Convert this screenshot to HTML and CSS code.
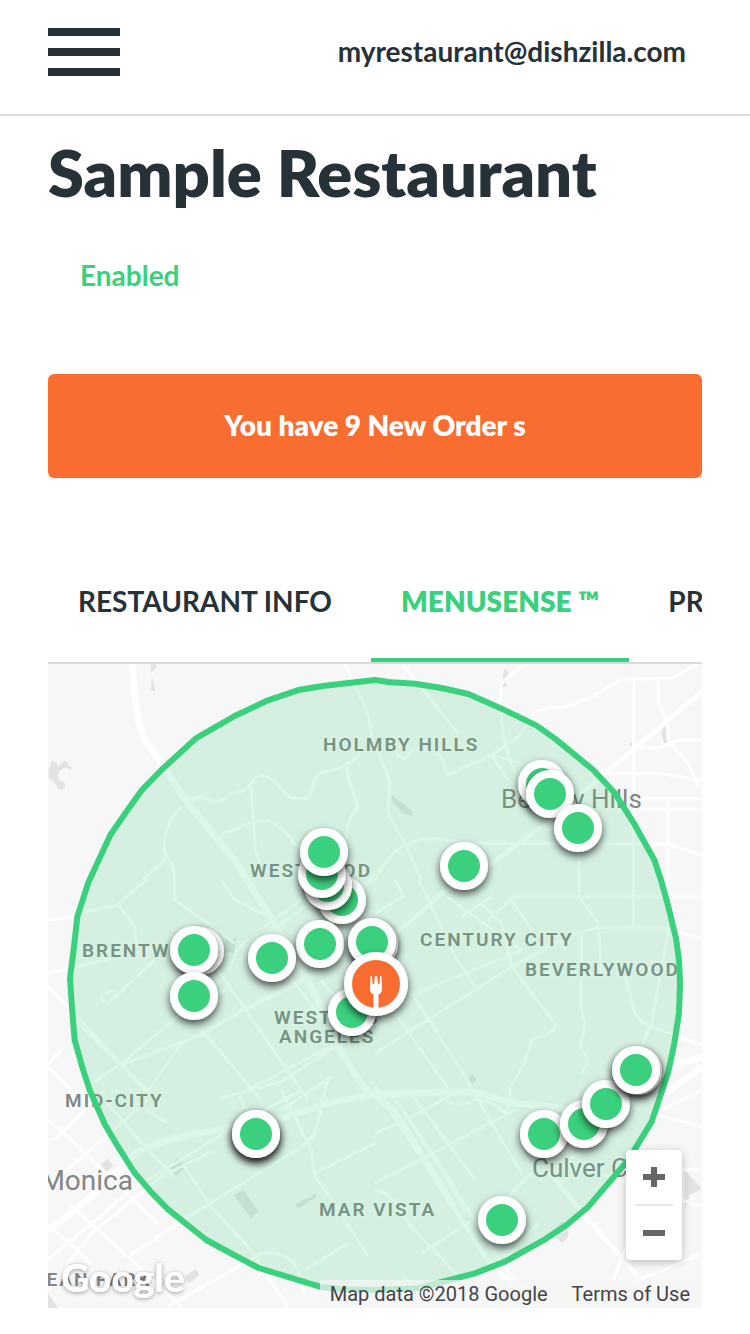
FILE: index.html
```html
<!DOCTYPE html>
<html lang="en">
<head>
<meta charset="utf-8">
<meta name="viewport" content="width=device-width, initial-scale=1">
<title>Sample Restaurant</title>
<link rel="stylesheet" href="styles.css">
</head>
<body>
<header class="topbar">
  <button class="menu" type="button" aria-label="Menu"><span class="menu-bar"></span><span class="menu-bar"></span><span class="menu-bar"></span></button>
  <span class="account">myrestaurant@dishzilla.com</span>
</header>
<main class="page">
  <h1 class="title">Sample Restaurant</h1>
  <p class="status">Enabled</p>
  <button class="orders" type="button">You have 9 New Order s</button>
  <nav class="tabs">
    <button class="tab" type="button">RESTAURANT INFO</button>
    <button class="tab tab-active" type="button">MENUSENSE ™</button>
    <button class="tab" type="button">PROMOTIONS</button>
  </nav>
  <section class="map" aria-label="Delivery map">
    <svg class="map-canvas" viewBox="0 0 654 644" role="img" aria-label="Customers around the restaurant">
      <defs>
        <filter id="drop" x="-50%" y="-50%" width="200%" height="200%"><feDropShadow dx="0" dy="4" stdDeviation="4" flood-color="#000" flood-opacity=".7"/></filter>
        <filter id="glow" x="-10%" y="-20%" width="120%" height="140%"><feDropShadow dx="0" dy="1" stdDeviation="2" flood-color="#000" flood-opacity=".4"/></filter>
        <g id="pin" filter="url(#drop)"><circle r="24" fill="#fff"/><circle r="16" fill="#3bd07d"/></g>
      </defs>
      <svg width="654" height="644" viewBox="0 12 1962 1932">
        <g class="land">
          <path d="M308 12l16 0 0 12-16 16zM312 52l8 28 2 12-14 0zM12 300l14 10 4 10 20-18 10 4 2 10 10 6-4 8-14-8-18 8-8 16 6 16 16 4 0 16-8 8-10-2-14-24-16-10 0-24z"/>
          <path d="M1368 25l14 10-8 28 2 18-14 0zM1848 195l14-6 0 40 4 16-18 4-8-30zM1032 405l62 50-2 14-22-6-40-40zM1745 250l8-4 0 10-8 2z"/>
          <path d="M530 840l36-6-6 24-2 24-28-10zM1262 1255l12-12 12 14-12 16-14-10zM160 1512l18-16 18 20-22 22zM368 1515l20-20 14 14 18 6-36 34-12-8zM558 1606l30-16 42 64-20 22zM744 1632l48-24 10-10 2 12-48 34-12-2zM410 1848l34-20 10 18-32 24zM1538 1686l18 4 6 36-18 24-26-22zM1910 1530l52 56-38 20-14 46zM0 1900l30 44-30 0z"/>
        </g>
        <g class="roads">
          <path class="highway" d="M252 12L262 110Q268 190 290 240L345 315L415 425L560 600L660 760L780 960L876 1170L946 1280L1036 1350L1156 1540L1216 1640"/>
          <path class="highway" d="M0 1710Q120 1630 250 1490Q280 1460 400 1430L716 1370L836 1330L966 1305L1066 1300L1276 1295L1396 1330L1476 1335Q1650 1370 1741 1330Q1841 1220 1962 1190M1851 1300L1962 1220"/>
          <path d="M892 12L925 90Q965 150 970 230L1025 360 1020 460 1075 560 1120 660M935 285Q880 330 830 335Q800 340 795 380Q790 415 770 415H730Q710 400 690 375Q640 320 610 370Q590 400 550 400Q500 445 465 408L415 425M895 315L905 370 930 440Q895 480 895 540M608 375L622 560Q630 610 650 640M510 545Q520 515 560 510Q610 480 660 482Q720 510 740 555M400 440Q350 490 348 560L355 595L285 660M355 595Q380 610 380 660V720L480 790L560 850"/>
          <path d="M516 1315L700 1265L860 1160M575 1308L590 1350M700 1350L850 1250M840 1260L816 1340L800 1420L760 1460M1051 1330L1200 1560L1250 1650M1196 1320Q1230 1350 1276 1320Q1320 1310 1370 1360L1400 1310M1276 1295L1420 1540"/>
          <g transform="translate(981 0)">
            <path d="M85 12L120 60L250 220M460 12Q400 40 378 75L376 130L385 220L400 290L420 340M60 270Q80 320 110 270Q150 260 195 285L220 345L350 285L430 230L480 155Q520 140 570 142L650 110L740 58L890 55L970 12M350 285L440 310M350 285L400 360M776 58V660M850 58V130L875 180L880 240L940 310L970 380M776 265H850L910 240H981M690 340H850L981 360M770 415H981M790 447H981M880 415V710M0 660Q40 580 90 555Q160 520 270 550L880 553L981 585M612 555V660"/>
            <path class="avenue" d="M981 95L690 340L500 500L350 610L200 700L100 790L-20 870"/>
          </g>
          <g transform="translate(0 660)">
            <path d="M0 120Q60 115 90 100L210 75L270 20L300 0M210 75L260 140L265 200M0 280L80 262L300 210M0 320L60 380L300 640M320 240L180 370Q130 350 200 330M0 560L100 660M-10 565L40 510M60 660L220 550L400 400L550 320M230 550L470 460L620 370L890 230M280 660L400 490L570 400L860 260M80 420L330 660M470 460L640 660M510 270L600 400L780 660M690 240L860 470M820 300L900 400M600 180Q560 200 545 270M580 640L981 430M650 140L760 60M660 160L800 60L981 0M520 0L560 60L680 120M800 200L981 -20"/>
          </g>
          <g transform="translate(981 660)">
            <path d="M0 520L190 400L410 260L600 160L670 142H860L981 175M410 50H981M340 120L420 50M260 110L350 50M215 50L440 210M100 350L440 210M320 70L380 130L410 260L540 430Q545 450 520 460L470 480Q450 560 405 620V660M612 0V50L670 130L680 290M775 0V142M620 160L618 380L630 440L615 500L640 540L620 580M750 290L775 380Q780 420 830 440L981 495M880 150L830 430L800 500M110 340L290 620M60 400L230 640M130 0L180 100L240 230L300 320M60 0L85 50L0 100M400 50L430 90L470 150"/>
          </g>
          <g transform="translate(0 1290)">
            <path d="M0 90L70 150L330 400M20 150L170 0M0 290L300 30M0 510L250 300L560 110L760 0M130 430L340 260L500 180M0 600L130 430M240 500L420 380L780 160M60 340L240 500L400 650M20 420L130 520M170 30L300 180L380 260M200 0L360 100M410 230L490 350L600 470L720 650M360 650L640 490M700 0L790 180L800 260L860 340L960 500M820 60L790 160M640 490Q720 480 750 540L770 620M770 540L900 460M800 250L981 160"/>
          </g>
          <g transform="translate(981 1290)">
            <path d="M40 0L180 200L380 520L450 600M0 130L150 60L250 0M100 0L160 80L300 270M0 280L420 60M140 490L400 320L520 200M0 300Q60 310 100 400L250 560M80 550L120 600M380 520L490 400M300 560L400 480M780 400L715 570M845 75L981 110M840 70L981 0M920 240H981M720 600L981 490M640 240L981 350M430 170L500 270M560 220L700 140L760 60"/>
            <path class="avenue" d="M500 220L640 390L790 560M0 -10L140 200L330 500L430 600"/>
          </g>
        </g>
      </svg>
      <g class="labels">
        <text class="district" x="275" y="87">HOLMBY HILLS</text>
        <text class="district" x="202" y="213">WESTWOOD</text>
        <text class="district" x="34" y="293">BRENTWOOD</text>
        <text class="district" x="372" y="282">CENTURY CITY</text>
        <text class="district" x="477" y="312">BEVERLYWOOD</text>
        <text class="district" x="226" y="360">WEST LOS</text>
        <text class="district" x="231" y="379">ANGELES</text>
        <text class="district" x="17" y="443">MID-CITY</text>
        <text class="district" x="271" y="552">MAR VISTA</text>
        <text class="district" x="-31" y="622">OCEAN PARK</text>
        <text class="city" x="453" y="144">Beverly Hills</text>
        <text class="city" x="484" y="513">Culver City</text>
        <text class="town" x="85" y="526" text-anchor="end">Santa Monica</text>
      </g>
      <svg width="654" height="644" viewBox="0 12 1962 1932">
        <polygon class="zone" points="981,60 830,77 755,89 660,121 560,168 505,200 445,234 340,330 280,392 235,455 187,525 122,665 88,770 78,860 66,955 72,1045 80,1140 103,1222 125,1290 170,1392 210,1460 258,1536 310,1597 360,1648 475,1740 530,1770 632,1824 815,1880 890,1888 981,1890 1111,1885 1181,1866 1281,1840 1371,1805 1491,1738 1556,1695 1621,1640 1741,1500 1811,1385 1843,1290 1861,1235 1879,1150 1893,1060 1896,970 1893,900 1884,835 1861,740 1839,660 1819,600 1756,487 1701,400 1636,330 1521,236 1466,197 1361,146 1261,102 1181,84 1101,71 1021,66"/>
      </svg>
      <g>
        <use href="#pin" x="494" y="120"/><use href="#pin" x="502" y="130"/><use href="#pin" x="530" y="164"/>
        <use href="#pin" x="416" y="202"/>
        <use href="#pin" x="294" y="236"/><use href="#pin" x="280" y="222"/><use href="#pin" x="274" y="210"/><use href="#pin" x="276" y="188"/>
        <use href="#pin" x="272" y="280"/><use href="#pin" x="224" y="294"/>
        <use href="#pin" x="152" y="287"/><use href="#pin" x="146" y="286"/><use href="#pin" x="146" y="332"/>
        <use href="#pin" x="326" y="280"/><use href="#pin" x="324" y="278"/><use href="#pin" x="304" y="348"/>
        <use href="#pin" x="208" y="470"/><use href="#pin" x="208" y="470"/>
        <use href="#pin" x="496" y="470"/><use href="#pin" x="536" y="460"/><use href="#pin" x="558" y="440"/>
        <use href="#pin" x="590" y="407"/><use href="#pin" x="588" y="406"/>
        <use href="#pin" x="454" y="556"/>
        <g transform="translate(328 320)" filter="url(#drop)">
          <circle r="32" fill="#fff"/><circle r="24" fill="#fa6d31"/>
          <path fill="#fff" d="M-5.500-8L-4-8L-3.500 0H-2L-1-8H1L2 0H3.500L4-8L5.500-8L6 5Q6 9 2.500 10.500V24H-2.500V10.500Q-6 9-6 5Z"/>
        </g>
      </g>
      <text class="brand" x="13" y="628" filter="url(#glow)">Google</text>
    </svg>
    <div class="zoom">
      <button class="zoom-button" type="button" aria-label="Zoom in"><svg width="22" height="22" viewBox="0 0 22 22"><path d="M0 11H22M11 1V21" stroke="#666" stroke-width="6"/></svg></button>
      <span class="zoom-line"></span>
      <button class="zoom-button" type="button" aria-label="Zoom out"><svg width="22" height="22" viewBox="0 0 22 22"><path d="M0 11H22" stroke="#666" stroke-width="6"/></svg></button>
    </div>
    <div class="credits"><span>Map data ©2018 Google</span><a class="terms" href="#terms">Terms of Use</a></div>
  </section>
</main>
</body>
</html>
```
FILE: styles.css
```css
* { box-sizing: border-box; }
body { margin: 0; background: #fff; color: #263238; font-family: Lato, "Liberation Sans", sans-serif; }
button { margin: 0; padding: 0; border: 0; background: none; color: inherit; font: inherit; cursor: pointer; }

.topbar { display: flex; align-items: flex-start; justify-content: space-between; padding: 28px 64px 38px 48px; border-bottom: 2px solid #dadada; }
.menu { display: flex; flex-direction: column; gap: 12px; width: 72px; }
.menu-bar { height: 8px; background: #263238; }
.account { font-size: 28px; line-height: 46px; font-weight: 700; }

.page { padding: 0 48px 26px; }
.title { margin: 16px 0 0; font-size: 65px; line-height: 80px; font-weight: 800; }
.status { margin: 43px 0 0; padding-left: 32px; font-size: 28px; line-height: 40px; font-weight: 700; color: #3bd07d; }
.orders { display: block; width: 100%; margin-top: 79px; padding: 31px 32px 33px; border-radius: 6px; background: #fa6d31; color: #fff; font-size: 28px; line-height: 40px; font-weight: 800; }

.tabs { display: flex; gap: 9px; margin-top: 64px; overflow: hidden; border-bottom: 2px solid #dadada; white-space: nowrap; }
.tab { flex: none; padding: 39px 30px 37px; border-bottom: 4px solid transparent; font-size: 28px; line-height: 40px; font-weight: 700; }
.tab-active { color: #3bd07d; border-bottom-color: #3bd07d; font-weight: 800; }

.map { position: relative; overflow: hidden; background: #f7f7f7; font-family: Roboto, "Liberation Sans", sans-serif; }
.map-canvas { display: block; width: 100%; height: auto; }
.land { fill: #e3e3e3; }
.roads { fill: none; stroke: #fff; stroke-width: 9px; stroke-linejoin: round; }
.avenue { stroke-width: 14px; }
.highway { stroke-width: 20px; }
.labels { fill: #858585; stroke: #f9f9f9; stroke-width: 4px; stroke-linejoin: round; paint-order: stroke; }
.district { font-size: 19px; font-weight: 600; letter-spacing: 2px; }
.city { font-size: 26px; }
.town { font-size: 28px; }
.zone { fill: #3bd07d; fill-opacity: .18; stroke: #3bd07d; stroke-width: 18px; stroke-linejoin: round; }
.brand { font-family: Lato, sans-serif; font-size: 39px; font-weight: 700; fill: #fff; }

.zoom { position: absolute; right: 20px; bottom: 48px; display: flex; flex-direction: column; align-items: center; width: 56px; border-radius: 4px; background: #fff; box-shadow: 0 2px 8px rgba(0, 0, 0, .25); }
.zoom-button { display: grid; place-items: center; width: 56px; height: 54px; }
.zoom-line { width: 38px; height: 2px; background: #e6e6e6; }
.credits { position: absolute; right: 0; bottom: 0; display: flex; gap: 24px; padding: 0 12px 0 10px; background: rgba(245, 245, 245, .7); color: #444; font-size: 20px; line-height: 28px; }
.terms { color: inherit; text-decoration: none; }
```
